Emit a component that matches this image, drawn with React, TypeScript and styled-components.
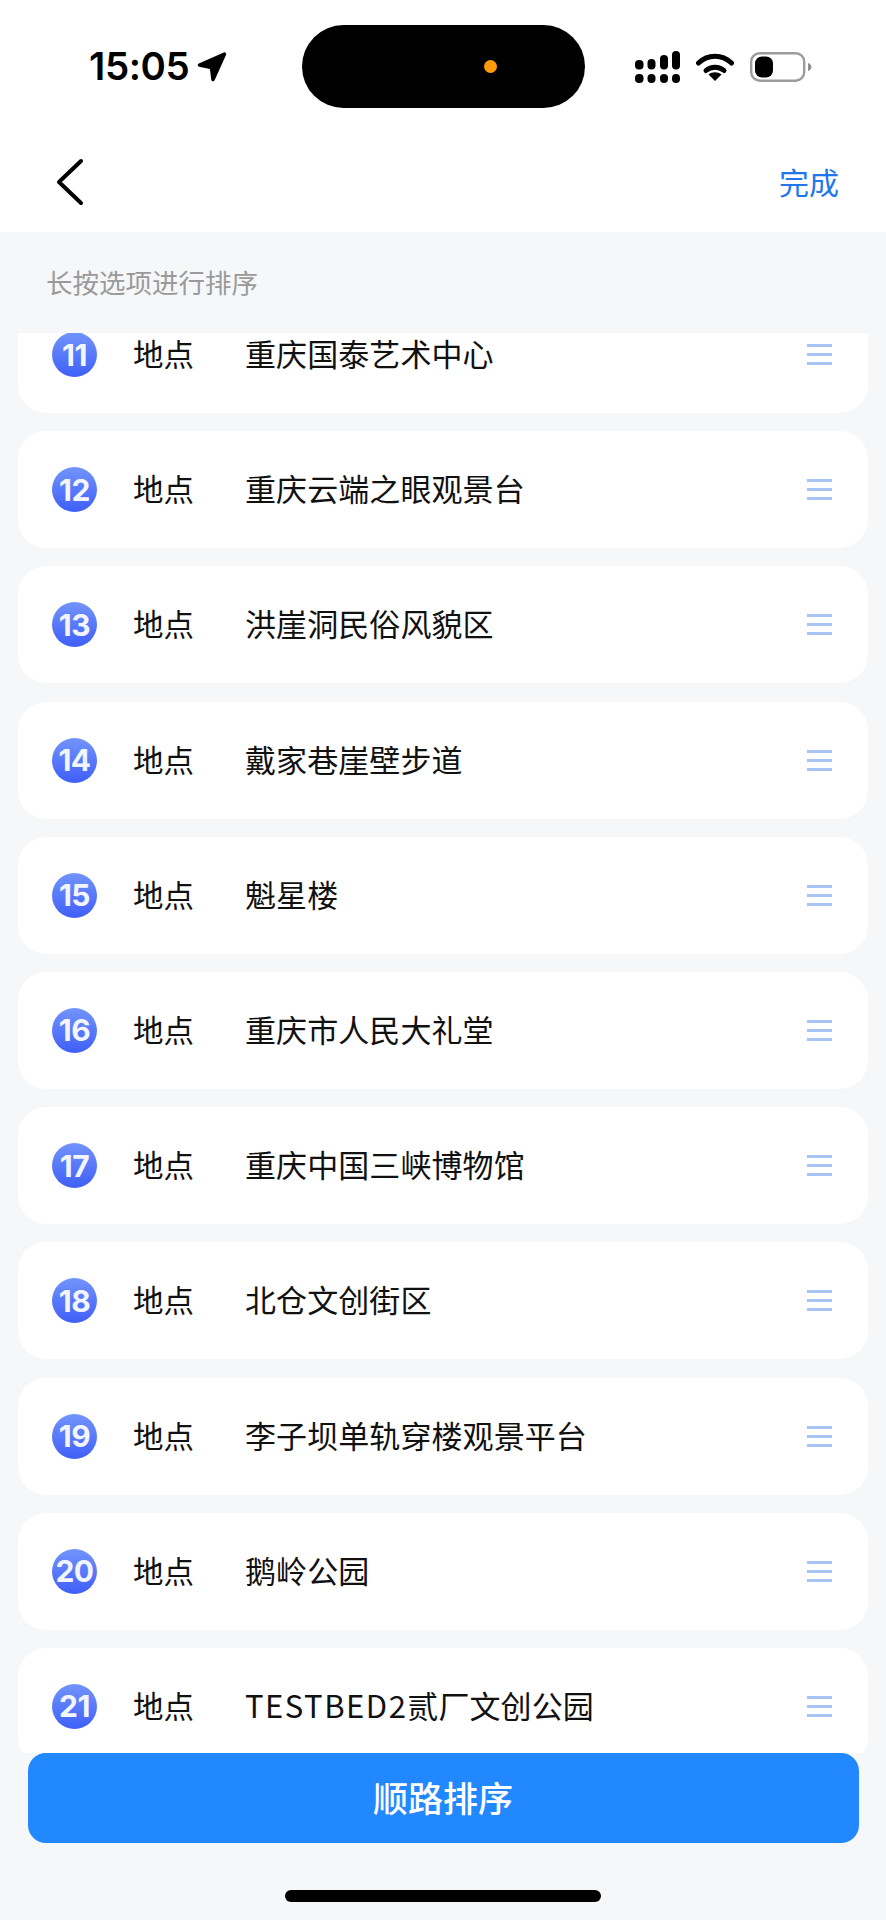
import React from 'react'
import styled, { createGlobalStyle } from 'styled-components'

const GlobalStyle = createGlobalStyle`
  html, body {
    margin: 0;
    padding: 0;
    background: #f5f7f9;
  }
  * {
    box-sizing: border-box;
  }
`

const Screen = styled.div`
  width: 886px;
  height: 1920px;
  display: flex;
  flex-direction: column;
  overflow: hidden;
  background: #f5f7f9;
  font-family: Inter, 'Noto Sans CJK SC', sans-serif;
`
const TopArea = styled.header`
  background: #ffffff;
  height: 232px;
`
const StatusBar = styled.div`
  height: 116px;
  padding-top: 25px;
  display: flex;
  align-items: flex-start;
`
const StatusLeft = styled.div`
  width: 302px;
  height: 83px;
  padding-left: 89px;
  display: flex;
  align-items: center;
  gap: 8px;
`
const Time = styled.span`
  font-size: 38.5px;
  font-weight: 600;
  letter-spacing: -0.4px;
  line-height: 1;
  color: #000000;
`
const Island = styled.div`
  width: 283px;
  height: 83px;
  border-radius: 42px;
  background: #000000;
  padding-right: 88px;
  display: flex;
  align-items: center;
  justify-content: flex-end;
`
const CameraDot = styled.div`
  width: 13px;
  height: 13px;
  border-radius: 50%;
  background: #ff9a0a;
`
const StatusRight = styled.div`
  height: 83px;
  padding-left: 50px;
  display: flex;
  align-items: center;
  gap: 16px;
`
const NavBar = styled.nav`
  height: 116px;
  padding: 16px 47px 0 54px;
  display: flex;
  align-items: center;
  justify-content: space-between;
`
const DoneLink = styled.span`
  font-size: 30px;
  line-height: 1;
  padding-bottom: 3px;
  color: #2176ee;
  font-family: 'Noto Sans CJK SC', sans-serif;
`
const Hint = styled.div`
  height: 101px;
  padding: 32px 0 0 46px;
  font-size: 26.5px;
  line-height: 36px;
  color: #9a9a9a;
  font-family: 'Noto Sans CJK SC', sans-serif;
`
const ListViewport = styled.div`
  height: 1420px;
  padding: 0 18px;
  overflow: hidden;
`
const List = styled.div`
  margin-top: -37px;
  display: flex;
  flex-direction: column;
  gap: 18.2px;
`
const Card = styled.div`
  height: 117px;
  flex: none;
  padding: 0 36px 0 34px;
  border-radius: 28px;
  background: #ffffff;
  display: flex;
  align-items: center;
`
const Badge = styled.div`
  width: 45px;
  height: 45px;
  flex: none;
  border-radius: 50%;
  background: linear-gradient(180deg, #7294fb 0%, #3f5ff8 100%);
  color: #f2f5ff;
  font-size: 30px;
  line-height: 1;
  font-weight: 700;
  letter-spacing: -0.5px;
  display: flex;
  align-items: center;
  justify-content: center;
`
const Kind = styled.span`
  margin-left: 36px;
  padding-bottom: 3px;
  width: 112px;
  flex: none;
  font-size: 30.5px;
  line-height: 36px;
  color: #111111;
  font-family: 'Noto Sans CJK SC', sans-serif;
`
const PlaceName = styled.span`
  flex: 1;
  padding-bottom: 3px;
  font-size: 31px;
  line-height: 36px;
  letter-spacing: 0.08px;
  color: #111111;
  font-family: 'Noto Sans CJK SC', sans-serif;
`
const LatinPart = styled.span`
  letter-spacing: 1.5px;
`
const Handle = styled.div`
  width: 25px;
  flex: none;
  display: flex;
  flex-direction: column;
  gap: 6px;
`
const HandleLine = styled.span`
  display: block;
  height: 3px;
  background: #a8c4f5;
`
const BottomArea = styled.div`
  flex: 1;
  display: flex;
  flex-direction: column;
  align-items: center;
`
const SortButton = styled.button`
  width: 831px;
  height: 90px;
  padding: 0 0 4px;
  border: none;
  border-radius: 18px;
  background: #2288ff;
  color: #ffffff;
  font-size: 35px;
  font-weight: 500;
  font-family: 'Noto Sans CJK SC', sans-serif;
`
const HomeBar = styled.div`
  margin-top: 47px;
  width: 316px;
  height: 12px;
  border-radius: 6px;
  background: #000000;
`

const LocationArrow = () => (
  <svg width="30" height="30" viewBox="0 0 30 30">
    <path
      d="M27.5 2 L2.5 13 L14.5 15.5 L16 27.5 Z"
      fill="#000"
      stroke="#000"
      strokeWidth="3.5"
      strokeLinejoin="round"
    />
  </svg>
)

const SignalIcon = () => (
  <svg width="45" height="32" viewBox="0 0 45 32">
    <rect x="0" y="9" width="8.5" height="9.5" rx="4" fill="#000" />
    <rect x="12.5" y="8" width="8" height="10.5" rx="4" fill="#000" />
    <rect x="25" y="4" width="8" height="14.5" rx="4" fill="#000" />
    <rect x="37" y="0" width="8" height="18.5" rx="4" fill="#000" />
    <rect x="0" y="23" width="8.5" height="9" rx="4" fill="#000" />
    <rect x="12.5" y="23" width="8" height="9" rx="4" fill="#000" />
    <rect x="25" y="23" width="8" height="9" rx="4" fill="#000" />
    <rect x="37" y="23" width="8" height="9" rx="4" fill="#000" />
  </svg>
)

const WifiIcon = () => (
  <svg width="38" height="28" viewBox="0 0 38 28">
    <path d="M2.5 10 C12 1 26 1 35.5 10" fill="none" stroke="#000" strokeWidth="5" strokeLinecap="round" />
    <path d="M10 17.5 C15 13 23 13 28 17.5" fill="none" stroke="#000" strokeWidth="5" strokeLinecap="round" />
    <path d="M19 28 L12.5 21.5 C16 18.5 22 18.5 25.5 21.5 Z" fill="#000" />
  </svg>
)

const BatteryIcon = () => (
  <svg width="62" height="30" viewBox="0 0 62 30">
    <rect x="1.2" y="1.2" width="53" height="27.5" rx="8.5" fill="#fff" stroke="#9c9c9c" strokeWidth="2.4" />
    <rect x="5" y="4.5" width="18" height="21" rx="7" fill="#000" />
    <path d="M58 11 C60.5 12 61.5 13.5 61.5 15 C61.5 16.5 60.5 18 58 19 Z" fill="#8f8f8f" />
  </svg>
)

const BackIcon = () => (
  <svg width="30" height="48" viewBox="0 0 30 48">
    <path d="M27 3 L5 24 L27 45" fill="none" stroke="#000" strokeWidth="4" strokeLinecap="round" strokeLinejoin="round" />
  </svg>
)

const places = [
  { no: 11, name: '重庆国泰艺术中心' },
  { no: 12, name: '重庆云端之眼观景台' },
  { no: 13, name: '洪崖洞民俗风貌区' },
  { no: 14, name: '戴家巷崖壁步道' },
  { no: 15, name: '魁星楼' },
  { no: 16, name: '重庆市人民大礼堂' },
  { no: 17, name: '重庆中国三峡博物馆' },
  { no: 18, name: '北仓文创街区' },
  { no: 19, name: '李子坝单轨穿楼观景平台' },
  { no: 20, name: '鹅岭公园' },
  { no: 21, latin: 'TESTBED2', name: '贰厂文创公园' },
]

const App: React.FC = () => {
  return (
    <Screen>
      <GlobalStyle />
      <TopArea>
        <StatusBar>
          <StatusLeft>
            <Time>15:05</Time>
            <LocationArrow />
          </StatusLeft>
          <Island>
            <CameraDot />
          </Island>
          <StatusRight>
            <SignalIcon />
            <WifiIcon />
            <BatteryIcon />
          </StatusRight>
        </StatusBar>
        <NavBar>
          <BackIcon />
          <DoneLink>完成</DoneLink>
        </NavBar>
      </TopArea>
      <Hint>长按选项进行排序</Hint>
      <ListViewport>
        <List>
          {places.map((place) => (
            <Card key={place.no}>
              <Badge>{place.no}</Badge>
              <Kind>地点</Kind>
              <PlaceName>
                {place.latin && <LatinPart>{place.latin}</LatinPart>}
                {place.name}
              </PlaceName>
              <Handle>
                <HandleLine />
                <HandleLine />
                <HandleLine />
              </Handle>
            </Card>
          ))}
        </List>
      </ListViewport>
      <BottomArea>
        <SortButton>顺路排序</SortButton>
        <HomeBar />
      </BottomArea>
    </Screen>
  )
}

export default App
